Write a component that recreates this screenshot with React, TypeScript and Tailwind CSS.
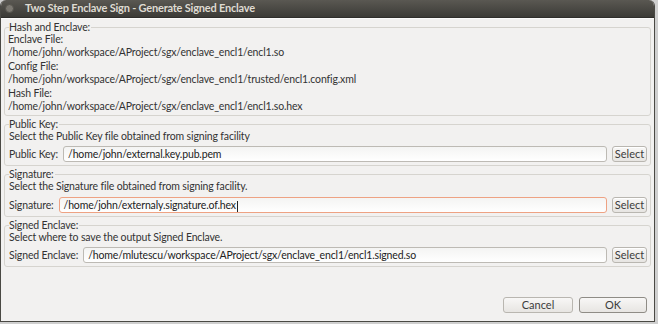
import React from "react";

const font = { fontFamily: 'Lato, "Open Sans", sans-serif' };

const Group = ({
  title,
  className = "",
  children,
}: {
  title: string;
  className?: string;
  children: React.ReactNode;
}) => (
  <fieldset className={"border border-[#d6d4cf] rounded-[3px] pl-[3px] pr-[3px] mx-0 " + className}>
    <legend className="px-0 ml-[1px] pr-[1px] leading-[12px] text-[#333333]">{title}</legend>
    {children}
  </fieldset>
);

const SelectButton = () => (
  <button className="h-[16px] w-[35px] rounded-[3px] border border-[#b9b6b0] bg-gradient-to-b from-[#f8f7f6] to-[#e7e5e2] text-[11px] leading-[14px] tracking-normal text-[#3c3c3c] shadow-[inset_0_1px_0_#ffffff]">
    Select
  </button>
);

const FileRow = ({
  label,
  value,
  focused,
}: {
  label: string;
  value: string;
  focused?: boolean;
}) => (
  <div className="flex items-center gap-[5px] pl-[1px] h-[16px]">
    <span className="text-[#333333] whitespace-nowrap">{label}</span>
    <div
      className={
        "flex-1 h-[16px] rounded-[3px] border bg-gradient-to-b from-[#f4f4f3] to-[#ffffff] px-[4px] leading-[14px] text-[#222222] whitespace-nowrap overflow-hidden " +
        (focused ? "border-[#eea283]" : "border-[#bdbab4]")
      }
    >
      {value}
      {focused && <span className="inline-block w-px h-[11px] bg-[#222222] align-middle ml-px" />}
    </div>
    <SelectButton />
  </div>
);

export default function App() {
  return (
    <div className="w-[658px] h-[324px] bg-[#cfcfcf] overflow-hidden text-[10.5px] tracking-[-0.15px]" style={font}>
      <div className="w-[655px] h-[322px] flex flex-col rounded-t-[6px] overflow-hidden border-l border-b border-r border-[#4a4944] bg-[#f2f1f0]">
        <div className="h-[18px] flex items-center bg-gradient-to-b from-[#5a5852] to-[#3c3b37] border-b border-[#2f2e2b]">
          <div className="ml-[4px] w-[9px] h-[9px] rounded-full bg-[#7b7871] border border-[#55534d]" />
          <span className="ml-[11px] text-[11px] font-bold text-[#dfdbd2] tracking-[-0.2px]">
            Two Step Enclave Sign - Generate Signed Enclave
          </span>
        </div>
        <div className="flex-1 flex flex-col px-[3px] pt-[2px] border-t border-[#fbfbfa]">
          <Group title="Hash and Enclave:" className="pb-[2px]">
            <div className="leading-[13.4px] text-[#333333]">
              <div>Enclave File:</div>
              <div>/home/john/workspace/AProject/sgx/enclave_encl1/encl1.so</div>
              <div>Config File:</div>
              <div>/home/john/workspace/AProject/sgx/enclave_encl1/trusted/encl1.config.xml</div>
              <div>Hash File:</div>
              <div>/home/john/workspace/AProject/sgx/enclave_encl1/encl1.so.hex</div>
            </div>
          </Group>
          <Group title="Public Key:" className="mt-[2px] pb-[3px]">
            <div className="leading-[13px] text-[#333333] pl-[1px] pb-[3px]">
              Select the Public Key file obtained from signing facility
            </div>
            <FileRow label="Public Key:" value="/home/john/external.key.pub.pem" />
          </Group>
          <Group title="Signature:" className="mt-[2px] pb-[3px]">
            <div className="leading-[13px] text-[#333333] pl-[1px] pb-[4px]">
              Select the Signature file obtained from signing facility.
            </div>
            <FileRow label="Signature:" value="/home/john/externaly.signature.of.hex" focused />
          </Group>
          <Group title="Signed Enclave:" className="mt-[2px] pb-[3px]">
            <div className="leading-[13px] text-[#333333] pl-[1px] pb-[3px]">
              Select where to save the output Signed Enclave.
            </div>
            <FileRow
              label="Signed Enclave:"
              value="/home/mlutescu/workspace/AProject/sgx/enclave_encl1/encl1.signed.so"
            />
          </Group>
          <div className="flex-1" />
          <div className="flex justify-end gap-[6px] pr-[4px] pb-[8px]">
            <button className="w-[70px] h-[16px] rounded-[3px] border border-[#b9b6b0] bg-gradient-to-b from-[#f8f7f6] to-[#e7e5e2] text-[11px] leading-[14px] tracking-normal text-[#3c3c3c]">
              Cancel
            </button>
            <button className="w-[68px] h-[16px] rounded-[3px] border border-[#8f8c86] bg-gradient-to-b from-[#f8f7f6] to-[#e7e5e2] text-[11px] leading-[14px] tracking-normal text-[#3c3c3c]">
              OK
            </button>
          </div>
        </div>
      </div>
    </div>
  );
}
